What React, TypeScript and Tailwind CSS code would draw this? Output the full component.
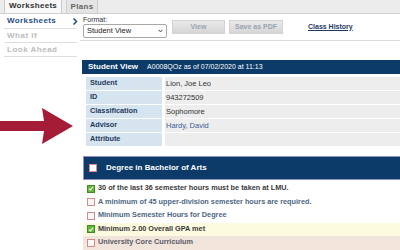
import React from 'react';

const navy = 'bg-[#0c3a69]';

function GreenCheck() {
  return (
    <span className="flex h-[8px] w-[8px] shrink-0 items-center justify-center border border-[#3f8a24] bg-[#62b834]">
      <svg viewBox="0 0 10 10" className="h-[7px] w-[7px]">
        <path d="M1.5 5.2 L4 7.6 L8.6 2" fill="none" stroke="white" strokeWidth={1.8} />
      </svg>
    </span>
  );
}

function RedBox({ white }: { white?: boolean }) {
  return (
    <span
      className={
        'block h-[8px] w-[8px] shrink-0 border border-[#d48b8b] ' +
        (white ? 'bg-white' : 'bg-[#fdf7f7]')
      }
    />
  );
}

const student = [
  { label: 'Student', value: 'Lion, Joe Leo' },
  { label: 'ID', value: '943272509' },
  { label: 'Classification', value: 'Sophomore' },
  { label: 'Advisor', value: 'Hardy, David', link: true },
  { label: 'Attribute', value: '' },
];

const reqs = [
  { text: '30 of the last 36 semester hours must be taken at LMU.', done: true, row: 'bg-white', color: 'text-[#3b3b3b]' },
  { text: 'A minimum of 45 upper-division semester hours are required.', done: false, row: 'bg-white', color: 'text-[#4d6784]' },
  { text: 'Minimum Semester Hours for Degree', done: false, row: 'bg-white', color: 'text-[#4d6784]' },
  { text: 'Minimum 2.00 Overall GPA met', done: true, row: 'bg-[#fcfadf]', color: 'text-[#3b3b3b]' },
  { text: 'University Core Curriculum', done: false, row: 'bg-[#f1e4da]', color: 'text-[#5a5a6a]' },
];

export default function App() {
  return (
    <div
      className="relative h-[250px] w-[400px] overflow-hidden bg-white"
      style={{ fontFamily: '"Liberation Sans", Arial, sans-serif' }}
    >
      {/* Tabs */}
      <div className="flex h-[14px] items-end gap-[4px] border-b border-[#cfcfcf] bg-[#ececec] pl-[4px]">
        <div className="flex h-[15px] w-[58px] items-center justify-center rounded-t-[2px] border border-b-0 border-[#c9c9c9] bg-[#f8f8f8] text-[8px] font-bold tracking-[0.3px] text-[#333]">
          Worksheets
        </div>
        <div className="flex h-[14px] w-[32px] items-center justify-center rounded-t-[2px] border border-b-0 border-[#cfcfcf] bg-[#e4e4e4] text-[8px] font-bold tracking-[0.3px] text-[#666]">
          Plans
        </div>
      </div>

      <div className="flex">
        {/* Left nav */}
        <div className="w-[80px] shrink-0 pl-[4px] pr-[3px]">
          <div className="flex h-[15px] items-center justify-between border-b border-[#dedede] pl-[3px]">
            <span className="text-[8px] font-bold tracking-[0.4px] text-[#1f4e86]">Worksheets</span>
            <svg viewBox="0 0 8 10" className="mr-[-1px] h-[9px] w-[6px]">
              <path d="M2 1 L6 5 L2 9" fill="none" stroke="#1f4e86" strokeWidth={2} />
            </svg>
          </div>
          <div className="flex h-[14px] items-center border-b border-[#dedede] pl-[3px] text-[8px] font-bold tracking-[0.5px] text-[#bcbcbc]">
            What If
          </div>
          <div className="flex h-[14px] items-center border-b border-[#dedede] pl-[3px] text-[8px] font-bold tracking-[0.5px] text-[#bcbcbc]">
            Look Ahead
          </div>
        </div>

        {/* Main */}
        <div className="min-w-0 flex-1">
          <div className="flex h-[27px] items-end gap-[5px] border-b border-[#dcdcdc] pb-[2px] pl-[3px]">
            <div className="flex flex-col">
              <span className="text-[7px] leading-[8px] text-[#333]">Format:</span>
              <div className="flex h-[14px] w-[84px] items-center justify-between rounded-[2px] border border-[#a8a8a8] bg-white px-[3px] text-[7.5px] text-[#222]">
                <span>Student View</span>
                <svg viewBox="0 0 8 6" className="h-[4px] w-[5px]">
                  <path d="M1 1 L4 4.5 L7 1" fill="none" stroke="#333" strokeWidth={1.4} />
                </svg>
              </div>
            </div>
            <div className="flex items-end gap-[4px] self-start pt-[6px]">
              <div className="flex h-[14px] w-[53px] items-center justify-center border border-[#d4d4d4] bg-gradient-to-b from-[#e9e9e9] to-[#d6d6d6] text-[7px] font-bold text-[#9aa4b2]">
                View
              </div>
              <div className="flex h-[14px] w-[54px] items-center justify-center border border-[#d4d4d4] bg-gradient-to-b from-[#e9e9e9] to-[#d6d6d6] text-[7px] font-bold text-[#9aa4b2]">
                Save as PDF
              </div>
            </div>
            <span className="mb-[6px] ml-[20px] text-[7px] font-bold text-[#1d3a63] underline">Class History</span>
          </div>

          {/* Student View table */}
          <div className="ml-[2px] mt-[19px] w-[330px]">
            <div className={'flex h-[14px] items-center gap-[9px] pl-[6px] text-white ' + navy}>
              <span className="text-[8px] font-bold">Student View</span>
              <span className="text-[7px]">A0008QOz as of 07/02/2020 at 11:13</span>
            </div>
            <div className="flex flex-col gap-[1px] pl-[4px] pt-[3px]">
              {student.map((r) => (
                <div key={r.label} className="flex h-[13px] gap-[3px]">
                  <div className="flex w-[76px] items-center bg-[#d6e4f0] pl-[4px] text-[7.3px] font-bold text-[#1f3a5f]">
                    {r.label}
                  </div>
                  <div
                    className={
                      'flex flex-1 items-center bg-[#ededed] pl-[1px] text-[7.5px] ' +
                      (r.link ? 'text-[#3a5c99]' : 'text-[#333]')
                    }
                  >
                    {r.value}
                  </div>
                </div>
              ))}
            </div>
          </div>

          {/* Degree block */}
          <div className="ml-[3px] mt-[10px] w-[330px]">
            <div className={'flex h-[24px] items-center border border-[#8f8fc4] pl-[5px] ' + navy}>
              <RedBox white />
              <span className="ml-[9px] text-[8px] font-bold text-white">Degree in Bachelor of Arts</span>
            </div>
            <div className="pt-[2px]">
              {reqs.map((r) => (
                <div key={r.text} className={'flex h-[13.5px] items-center gap-[3px] pl-[4px] ' + r.row}>
                  {r.done ? <GreenCheck /> : <RedBox />}
                  <span className={'whitespace-nowrap text-[7.3px] font-bold ' + r.color}>{r.text}</span>
                </div>
              ))}
            </div>
          </div>
        </div>
      </div>

      {/* Red arrow overlay */}
      <svg viewBox="0 0 76 36" className="absolute left-0 top-[108px] h-[36px] w-[76px]">
        <path d="M0 13 L44 13 L42 0 L73 18 L42 36 L44 23 L0 23 Z" fill="#a51c36" />
      </svg>
    </div>
  );
}
